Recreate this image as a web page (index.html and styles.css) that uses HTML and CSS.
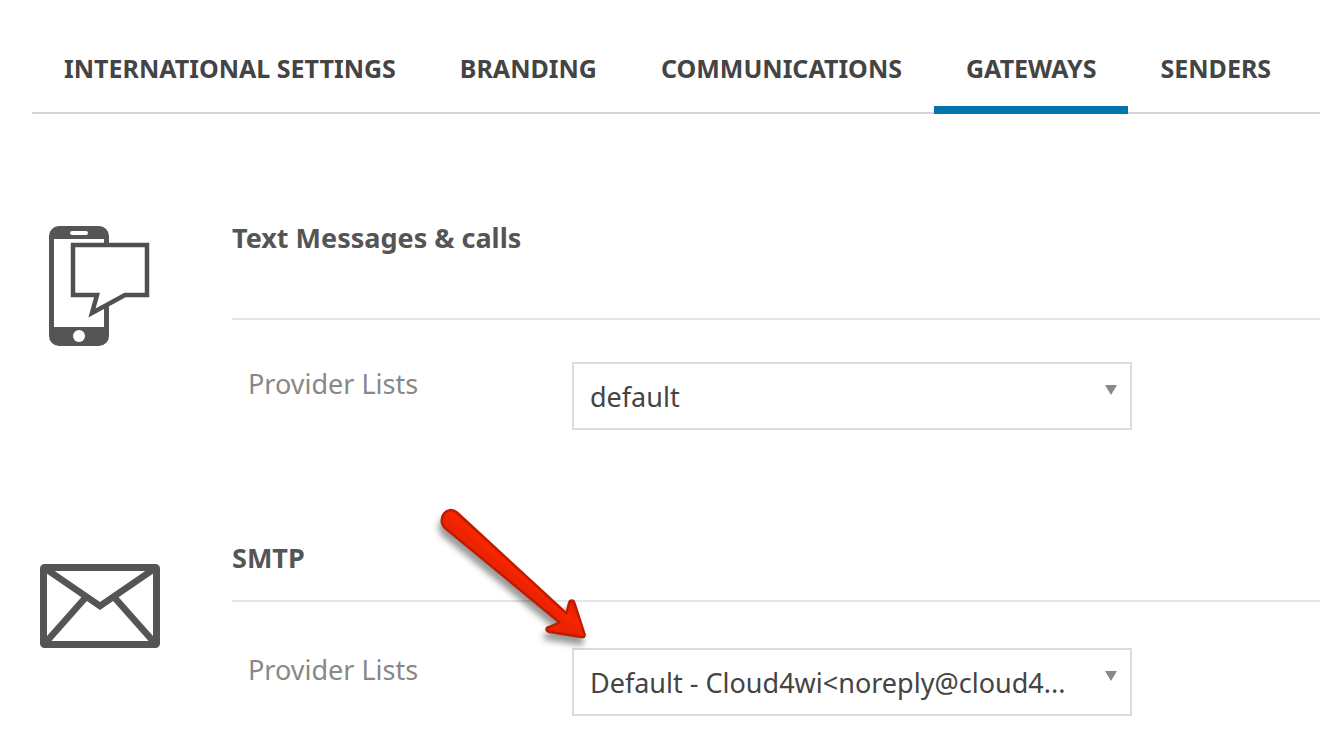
FILE: index.html
```html
<!DOCTYPE html>
<html lang="en">
<head>
<meta charset="utf-8">
<title>Gateways</title>
<link rel="stylesheet" href="styles.css">
</head>
<body>
<nav class="tabs">
  <a class="tab" href="#international">INTERNATIONAL SETTINGS</a>
  <a class="tab" href="#branding">BRANDING</a>
  <a class="tab" href="#communications">COMMUNICATIONS</a>
  <a class="tab tab-active" href="#gateways" aria-current="page">GATEWAYS</a>
  <a class="tab" href="#senders">SENDERS</a>
</nav>
<main class="sections">
  <section class="section">
    <div class="section-icon">
      <svg width="120" height="120" viewBox="0 0 120 120" aria-hidden="true">
        <rect x="9" y="0" width="60" height="120" rx="10" fill="#555"/>
        <path d="M14 13H64V101H14Z" fill="#fff"/>
        <rect x="30" y="5" width="18" height="4" rx="2" fill="#fff"/>
        <circle cx="39" cy="110" r="6" fill="#fff"/>
        <path d="M33 19H107V69H85L52 87L57 69H33Z" fill="#fff" stroke="#505050" stroke-width="4.5"/>
      </svg>
    </div>
    <div class="section-body">
      <h2 class="section-title section-title-tall">Text Messages &amp; calls</h2>
      <div class="field">
        <label class="field-label" for="sms-provider">Provider Lists</label>
        <div class="picker">
          <select class="picker-select" id="sms-provider"><option>default</option></select>
          <svg class="picker-caret" width="12" height="10" viewBox="0 0 12 10" aria-hidden="true"><path d="M0 0H12L6 10Z" fill="#888"/></svg>
        </div>
      </div>
    </div>
  </section>
  <section class="section">
    <div class="section-icon section-icon-mail">
      <svg width="120" height="84" viewBox="0 0 120 84" aria-hidden="true">
        <rect x="3.5" y="3.5" width="113" height="77" rx="1" fill="#fff" stroke="#555" stroke-width="7"/>
        <path d="M6 5L60 42L114 5M7 77L46 33M113 77L74 33" fill="none" stroke="#555" stroke-width="6.5"/>
      </svg>
    </div>
    <div class="section-body">
      <h2 class="section-title">SMTP</h2>
      <div class="field field-smtp">
        <label class="field-label" for="smtp-provider">Provider Lists</label>
        <div class="picker">
          <select class="picker-select" id="smtp-provider"><option>Default - Cloud4wi&lt;noreply@cloud4...</option></select>
          <svg class="picker-caret" width="12" height="10" viewBox="0 0 12 10" aria-hidden="true"><path d="M0 0H12L6 10Z" fill="#888"/></svg>
        </div>
      </div>
    </div>
  </section>
  <svg class="pointer" width="180" height="160" viewBox="0 0 180 160" aria-hidden="true">
    <defs>
      <linearGradient id="red" gradientUnits="userSpaceOnUse" x1="90" y1="63" x2="78" y2="77">
        <stop offset="0" stop-color="#dc2000"/><stop offset=".65" stop-color="#fa2600"/><stop offset="1" stop-color="#ec2300"/>
      </linearGradient>
    </defs>
    <path class="pointer-shape" d="M27 17.500L136.500 118.500L139 108C140 104.500 143.500 104.500 144.500 108L154.500 139C155 141.500 154 142.500 151.500 142L120 137C115.500 136 115.500 133 119 132L129.500 127.500L15 33C6 24 17 9 27 17.500Z" fill="url(#red)" stroke="#be1c00" stroke-width="2.400" stroke-linejoin="round"/>
  </svg>
</main>
</body>
</html>
```
FILE: styles.css
```css
* { box-sizing: border-box; }
body {
  margin: 0;
  background: #fff;
  color: #444;
  font-family: "Noto Sans", "Open Sans", sans-serif;
}
.tabs {
  display: flex;
  margin-left: 32px;
  padding-top: 26px;
  box-shadow: inset 0 -2px #d4d4d4;
}
.tab {
  padding: 24px 32px 20px;
  border-bottom: 8px solid transparent;
  color: #444;
  font-size: 25px;
  font-weight: 700;
  line-height: 36px;
  text-decoration: none;
  white-space: nowrap;
}
.tab-active { border-color: #0076ad; }
.sections {
  position: relative;
  display: flex;
  flex-direction: column;
  gap: 110px;
  padding: 106px 0 36px 40px;
}
.section { display: flex; gap: 72px; }
.section-icon { flex: none; width: 120px; padding-top: 6px; }
.section-icon-mail { padding-top: 24px; }
.section-icon svg { display: block; }
.section-body { flex: 1; min-width: 0; }
.section-title {
  margin: 0;
  padding-bottom: 24px;
  border-bottom: 2px solid #e4e4e4;
  color: #555;
  font-size: 27px;
  font-weight: 700;
  line-height: 36px;
}
.section-title-tall { padding-bottom: 62px; }
.field {
  display: flex;
  align-items: flex-start;
  padding: 42px 0 0 16px;
}
.field-smtp { padding-top: 46px; }
.field-label {
  flex: none;
  width: 324px;
  padding-top: 4px;
  color: #888;
  font-size: 27px;
  line-height: 36px;
}
.picker { position: relative; flex: 0 1 560px; min-width: 0; }
.picker-select {
  display: block;
  width: 100%;
  height: 68px;
  padding: 0 48px 0 16px;
  appearance: none;
  border: 2px solid #dcdcdc;
  border-radius: 0;
  background: #fff;
  color: #444;
  font-family: inherit;
  font-size: 27px;
}
.picker-caret { position: absolute; top: 23px; right: 15px; pointer-events: none; }
.pointer {
  position: absolute;
  top: 381px;
  left: 430px;
  pointer-events: none;
}
.pointer-shape { filter: drop-shadow(-2px 7px 3px rgba(0, 0, 0, .4)); }
```
